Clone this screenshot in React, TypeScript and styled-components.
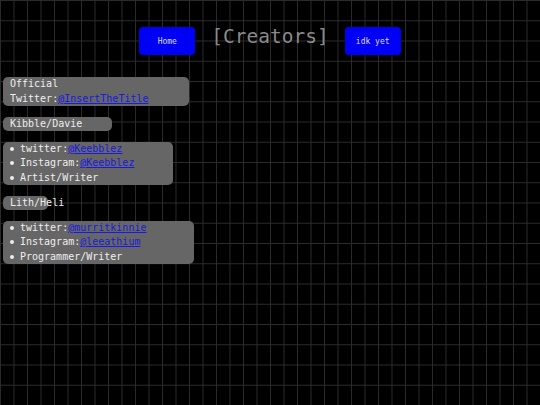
import React from "react";
import styled, { createGlobalStyle } from "styled-components";

const Global = createGlobalStyle`
  html, body { margin: 0; padding: 0; height: 100%; }
  body {
    background-color: #000;
    background-image:
      linear-gradient(to right, #2c2c2c 1px, transparent 1px),
      linear-gradient(to bottom, #2c2c2c 1px, transparent 1px);
    background-size: 13.5px 20.25px;
    background-position: 13.5px 20.25px;
    font-family: "DejaVu Sans Mono", "Liberation Mono", monospace;
    color: #eee;
  }
  #root { min-height: 100%; }
`;

const Page = styled.div`
  display: flex;
  flex-direction: column;
`;

const Header = styled.header`
  display: flex;
  justify-content: center;
  align-items: flex-start;
  gap: 16px;
  padding-top: 27px;
`;

const NavButton = styled.button`
  width: 56px;
  height: 28px;
  border: none;
  border-radius: 4px;
  background: #0000f5;
  color: #ddd;
  font-family: "DejaVu Sans Mono", "Liberation Mono", monospace;
  font-size: 8px;
  padding: 0;
`;

const Title = styled.h1`
  margin: -2px 0 0;
  font-size: 19.5px;
  font-weight: normal;
  color: #8a8a8a;
  line-height: normal;
`;

const Content = styled.main`
  display: flex;
  flex-direction: column;
  align-items: flex-start;
  gap: 10.5px;
  margin-top: 22px;
  padding-left: 3px;
  font-size: 10px;
  line-height: 14.5px;
`;

const Card = styled.div<{ $w: number }>`
  width: ${(p) => p.$w}px;
  box-sizing: border-box;
  background: #666;
  border-radius: 5px;
  padding: 0 7px;
`;

const Tag = styled.div<{ $w: number }>`
  width: ${(p) => p.$w}px;
  box-sizing: border-box;
  background: #666;
  border-radius: 5px;
  padding: 0 7px;
  white-space: nowrap;
  overflow: visible;
`;

const List = styled.ul`
  list-style: none;
  margin: 0;
  padding: 0;
`;

const Item = styled.li`
  display: flex;
  align-items: center;
  white-space: nowrap;
  &::before {
    content: "";
    width: 4px;
    height: 4px;
    border-radius: 50%;
    background: #eee;
    margin: 0 6px 0 0;
    flex: none;
  }
`;

const Link = styled.a`
  color: #1a1ae0;
  text-decoration: underline;
`;

export default function App() {
  return (
    <Page>
      <Global />
      <Header>
        <NavButton>Home</NavButton>
        <Title>[Creators]</Title>
        <NavButton>idk yet</NavButton>
      </Header>
      <Content>
        <Card $w={186}>
          Official
          <br />
          Twitter:<Link href="#">@InsertTheTitle</Link>
        </Card>
        <Tag $w={109}>Kibble/Davie</Tag>
        <Card $w={170}>
          <List>
            <Item>
              twitter:<Link href="#">@Keebblez</Link>
            </Item>
            <Item>
              Instagram:<Link href="#">@Keebblez</Link>
            </Item>
            <Item>Artist/Writer</Item>
          </List>
        </Card>
        <Tag $w={45}>Lith/Heli</Tag>
        <Card $w={191}>
          <List>
            <Item>
              twitter:<Link href="#">@murritkinnie</Link>
            </Item>
            <Item>
              Instagram:<Link href="#">@leeathium</Link>
            </Item>
            <Item>Programmer/Writer</Item>
          </List>
        </Card>
      </Content>
    </Page>
  );
}
